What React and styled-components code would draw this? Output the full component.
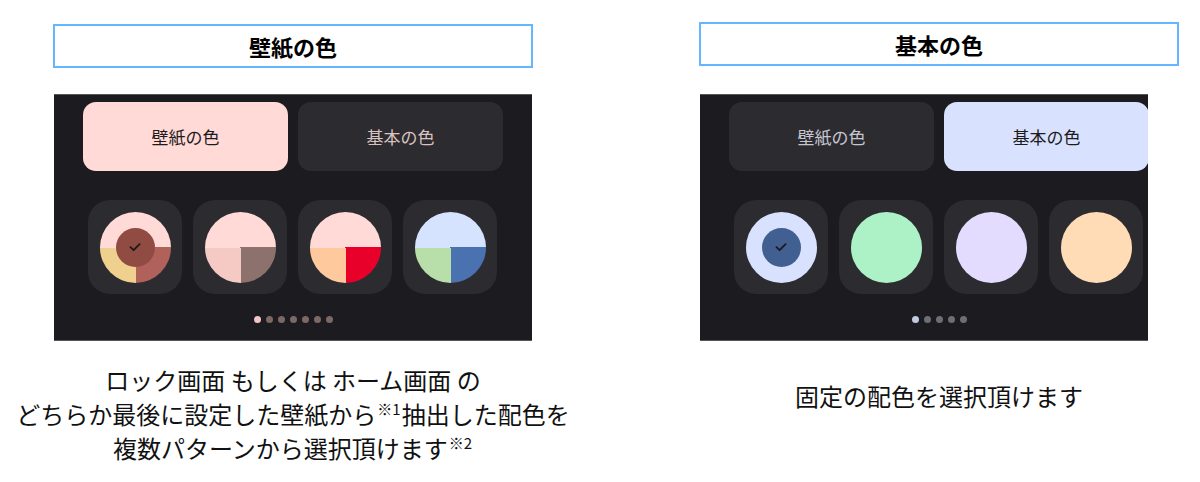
import React from 'react'
import styled, { createGlobalStyle } from 'styled-components'

const GlobalStyle = createGlobalStyle`
    body {
        margin: 0;
        background: #ffffff;
        font-family: "Noto Sans CJK JP", "Noto Sans", sans-serif;
    }
`

const Page = styled.div`
    width: 1200px;
    height: 482px;
    padding: 22px 0 0 53px;
    box-sizing: border-box;

    display: flex;
    gap: 166px;
    overflow: hidden;
`

const Column = styled.section`
    width: 480px;

    display: flex;
    flex-direction: column;
`

const Heading = styled.h1`
    margin: ${p => p.$offset}px 0 0;
    height: 44px;
    box-sizing: border-box;
    border: 2px solid #63b6ff;

    display: flex;
    align-items: center;
    justify-content: center;

    font-size: 22px;
    font-weight: 700;
    color: #000000;
`

const Crop = styled.div`
    margin: ${p => 28 - p.$offset}px 0 0 1px;
    width: ${p => p.$width}px;
    overflow: hidden;
`

const Panel = styled.div`
    width: 478px;
    height: 247px;
    box-sizing: border-box;
    padding: 7px 29px 0;
    background: #1c1b1f;
    border-top: 1px solid #55555a;
    border-bottom: 1px solid #55555a;

    display: flex;
    flex-direction: column;
`

const Tabs = styled.div`
    display: grid;
    grid-template-columns: 1fr 1fr;
    gap: 10px;
`

const Tab = styled.div`
    height: 69px;
    border-radius: 13px;
    background: ${p => (p.$active ? p.$accent : '#2c2b30')};

    display: flex;
    align-items: center;
    justify-content: center;

    font-size: 17px;
    color: ${p => (p.$active ? '#1e1b1c' : p.$muted)};
`

const Swatches = styled.div`
    margin-top: 29px;
    padding: 0 6px 0 5px;

    display: flex;
    gap: 11px;
`

const Tile = styled.div`
    width: 94px;
    height: 94px;
    border-radius: 22px;
    background: #2c2b30;

    display: flex;
    align-items: center;
    justify-content: center;
`

const Circle = styled.div`
    width: 71px;
    height: 71px;
    border-radius: 50%;
    background: ${p => p.$fill};

    display: flex;
    align-items: center;
    justify-content: center;
`

const Selected = styled.div`
    width: 39px;
    height: 39px;
    border-radius: 50%;
    background: ${p => p.$fill};

    display: flex;
    align-items: center;
    justify-content: center;
`

const Dots = styled.div`
    margin-top: 22px;

    display: flex;
    justify-content: center;
    gap: 5px;
`

const Dot = styled.span`
    width: 7px;
    height: 7px;
    border-radius: 50%;
    background: ${p => p.$color};
`

const Caption = styled.p`
    align-self: center;
    margin: ${p => p.$top}px 0 0;
    text-align: center;
    font-size: 24px;
    line-height: 34px;
    color: #111111;
    white-space: nowrap;
`

const Note = styled.sup`
    font-size: 15px;
    line-height: 0;
    vertical-align: 9px;
    margin: 0 1px;
`

const Check = () => (
    <svg width="14" height="14" viewBox="0 0 14 14">
        <path d="M2.5 7.2 L5.6 10.2 L11.6 4.2" fill="none" stroke="#1b1a1b" strokeWidth="1.8" strokeLinecap="round" strokeLinejoin="round" />
    </svg>
)

const split = ([top, left, right]) =>
    `conic-gradient(from 90deg, ${right} 0deg 90deg, ${left} 90deg 180deg, ${top} 180deg 360deg)`

const columns = [
    {
        title: '壁紙の色',
        offset: 2,
        width: 478,
        active: 0,
        accent: '#ffdad6',
        muted: '#d9c2bf',
        swatches: [
            { fill: split(['#ffdad6', '#f0d08e', '#b0625a']), selected: '#904b43' },
            { fill: split(['#ffdad6', '#f5c9c4', '#8c716d']) },
            { fill: split(['#ffdad6', '#ffc99e', '#e8002a']) },
            { fill: split(['#d6e3ff', '#b8dfa9', '#4a72b0']) }
        ],
        dots: 7,
        dotOn: '#f3c8c2',
        dotOff: '#7c6865',
        captionTop: 22,
        caption: (
            <>
                ロック画面 もしくは ホーム画面 の<br />
                どちらか最後に設定した壁紙から<Note>※1</Note>抽出した配色を<br />
                複数パターンから選択頂けます<Note>※2</Note>
            </>
        )
    },
    {
        title: '基本の色',
        offset: 0,
        width: 448,
        active: 1,
        accent: '#d8e2ff',
        muted: '#c5c6d0',
        swatches: [
            { fill: '#d8e2ff', selected: '#415f91' },
            { fill: '#adf2c7' },
            { fill: '#e4dcff' },
            { fill: '#ffdcb5' }
        ],
        dots: 5,
        dotOn: '#c2cade',
        dotOff: '#6d6e77',
        captionTop: 38,
        caption: <>固定の配色を選択頂けます</>
    }
]

const tabLabels = ['壁紙の色', '基本の色']

export default () => (
    <Page>
        <GlobalStyle />
        {columns.map(c => (
            <Column key={c.title}>
                <Heading $offset={c.offset}>{c.title}</Heading>
                <Crop $offset={c.offset} $width={c.width}>
                    <Panel>
                        <Tabs>
                            {tabLabels.map((label, i) => (
                                <Tab key={label} $active={i === c.active} $accent={c.accent} $muted={c.muted}>
                                    {label}
                                </Tab>
                            ))}
                        </Tabs>
                        <Swatches>
                            {c.swatches.map((s, i) => (
                                <Tile key={i}>
                                    <Circle $fill={s.fill}>
                                        {s.selected && (
                                            <Selected $fill={s.selected}>
                                                <Check />
                                            </Selected>
                                        )}
                                    </Circle>
                                </Tile>
                            ))}
                        </Swatches>
                        <Dots>
                            {Array.from({ length: c.dots }, (_, i) => (
                                <Dot key={i} $color={i === 0 ? c.dotOn : c.dotOff} />
                            ))}
                        </Dots>
                    </Panel>
                </Crop>
                <Caption $top={c.captionTop}>{c.caption}</Caption>
            </Column>
        ))}
    </Page>
)
